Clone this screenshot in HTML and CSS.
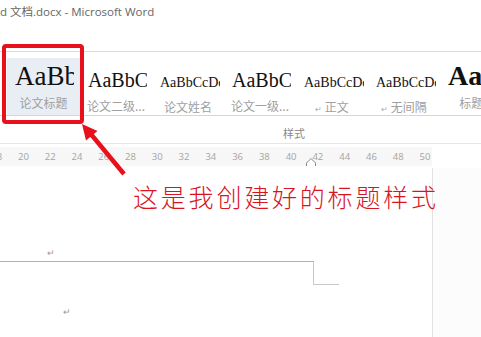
FILE: index.html
```html
<!DOCTYPE html>
<html lang="zh-CN">
<head>
    <meta charset="UTF-8">
    <title>文档.docx - Microsoft Word</title>
    <link rel="stylesheet" href="styles.css">
</head>
<body>
    <div class="titlebar">d 文档.docx - Microsoft Word</div>

    <div class="gallery">
        <div class="style-item selected">
            <div class="sample s-title">AaBbC</div>
            <div class="label">论文标题</div>
        </div>
        <div class="style-item">
            <div class="sample s-big">AaBbC</div>
            <div class="label">论文二级...</div>
        </div>
        <div class="style-item">
            <div class="sample s-small">AaBbCcDc</div>
            <div class="label">论文姓名</div>
        </div>
        <div class="style-item">
            <div class="sample s-big">AaBbC</div>
            <div class="label">论文一级...</div>
        </div>
        <div class="style-item">
            <div class="sample s-small">AaBbCcDc</div>
            <div class="label"><span class="ret">↵</span> 正文</div>
        </div>
        <div class="style-item">
            <div class="sample s-small">AaBbCcDc</div>
            <div class="label"><span class="ret">↵</span> 无间隔</div>
        </div>
        <div class="style-item">
            <div class="sample s-bold">AaBb</div>
            <div class="label">标题 1</div>
        </div>
    </div>

    <div class="group-name">样式</div>

    <div class="ruler">
        <div class="ticks">
            <span>18</span><span>20</span><span>22</span><span>24</span><span>26</span>
            <span>28</span><span>30</span><span>32</span><span>34</span><span>36</span>
            <span>38</span><span>40</span><span>42</span><span>44</span><span>46</span>
            <span>48</span><span>50</span>
        </div>
        <svg class="indent" width="10" height="9" viewBox="0 0 10 9">
            <path d="M5 0.5 L9.5 5 L9.5 8.5 L0.5 8.5 L0.5 5 Z" fill="#fff" stroke="#888" stroke-width="1"/>
        </svg>
    </div>

    <div class="doc">
        <div class="page">
            <div class="mark first">↵</div>
            <div class="header-rule"></div>
            <div class="corner"></div>
            <div class="mark second">↵</div>
        </div>
        <div class="gutter"></div>
    </div>

    <div class="highlight"></div>
    <svg class="arrow" width="481" height="337" viewBox="0 0 481 337">
        <line x1="124" y1="174" x2="90" y2="133" stroke="#e8101a" stroke-width="4.5"/>
        <polygon points="82,124 97.5,131 86,140.5" fill="#e8101a"/>
    </svg>
    <div class="note">这是我创建好的标题样式</div>
</body>
</html>
```

FILE: styles.css
```css
body {
    margin: 0;
    width: 481px;
    height: 337px;
    overflow: hidden;
    background: #fff;
    font-family: 'Open Sans', 'Noto Sans CJK SC', sans-serif;
    position: relative;
}
.titlebar {
    height: 26px;
    font-size: 11.5px;
    line-height: 24px;
    color: #666;
    white-space: nowrap;
}
.gallery {
    margin-top: 25px;
    display: flex;
    padding: 6px 0 0 7px;
    border-top: 1px solid #dcdcdc;
    border-bottom: 1px solid #d6d6d6;
    height: 57px;
    overflow: hidden;
}
.style-item {
    flex: 0 0 72px;
    height: 57px;
    box-sizing: border-box;
    padding-left: 8px;
}
.style-item.selected {
    flex-basis: 73px;
    background: #e9eef5;
}
.sample {
    font-family: 'Liberation Serif', serif;
    color: #111;
    height: 32px;
    width: 59px;
    overflow: hidden;
    white-space: nowrap;
    display: flex;
    align-items: flex-end;
    line-height: 1;
}
.s-title {
    font-size: 27px;
    padding-bottom: 1px;
}
.s-big {
    font-size: 20px;
    padding-bottom: 4px;
}
.s-small {
    font-size: 14px;
    padding-bottom: 5px;
    width: 60px;
}
.s-bold {
    font-size: 28px;
    font-weight: bold;
    padding-bottom: 1px;
}
.label {
    margin-left: -8px;
    margin-top: 4px;
    font-family: 'Noto Sans CJK SC', sans-serif;
    font-size: 12px;
    line-height: 16px;
    color: #a0a0a0;
    text-align: center;
    white-space: nowrap;
}
.ret {
    font-size: 8px;
    color: #aaa;
}
.group-name {
    height: 27px;
    padding-left: 283px;
    font-family: 'Noto Sans CJK SC', sans-serif;
    font-size: 11px;
    line-height: 34px;
    color: #888;
    border-bottom: 1px solid #e6e6e6;
}
.ruler {
    position: relative;
    width: 432px;
    height: 19px;
    margin-top: 3px;
    background: #f7f7f7;
    overflow: hidden;
}
.ticks {
    display: flex;
    margin-left: -16.7px;
}
.ticks span {
    flex: 0 0 26.77px;
    text-align: center;
    font-size: 9.5px;
    line-height: 19px;
    color: #a4a4a4;
}
.indent {
    position: absolute;
    left: 306px;
    top: 11px;
}
.doc {
    display: flex;
    margin-top: 2px;
    height: 170px;
}
.page {
    width: 432px;
    border-right: 1px solid #e2e2e2;
    background: #fff;
}
.gutter {
    flex: 1;
    background: #fcfcfc;
}
.mark {
    font-size: 9px;
    line-height: 10px;
    color: #999;
}
.mark.first {
    margin-top: 80px;
    padding-left: 47px;
}
.header-rule {
    width: 314px;
    margin-top: 3px;
    border-bottom: 1px solid #b0b0b0;
}
.corner {
    margin-left: 313px;
    width: 25px;
    height: 22px;
    border-left: 1px solid #c8c8c8;
    border-bottom: 1px solid #c8c8c8;
}
.mark.second {
    margin-top: 22px;
    padding-left: 63px;
}
/* annotation overlays */
.highlight {
    position: absolute;
    left: 2px;
    top: 44px;
    width: 74px;
    height: 72px;
    border: 4px solid #e8101a;
    border-radius: 4px;
}
.arrow {
    position: absolute;
    left: 0;
    top: 0;
}
.note {
    position: absolute;
    left: 133px;
    top: 181px;
    font-family: 'Noto Sans CJK SC', sans-serif;
    font-weight: 300;
    font-size: 25px;
    letter-spacing: 2.8px;
    line-height: 30px;
    color: #d8141e;
    white-space: nowrap;
}
```
